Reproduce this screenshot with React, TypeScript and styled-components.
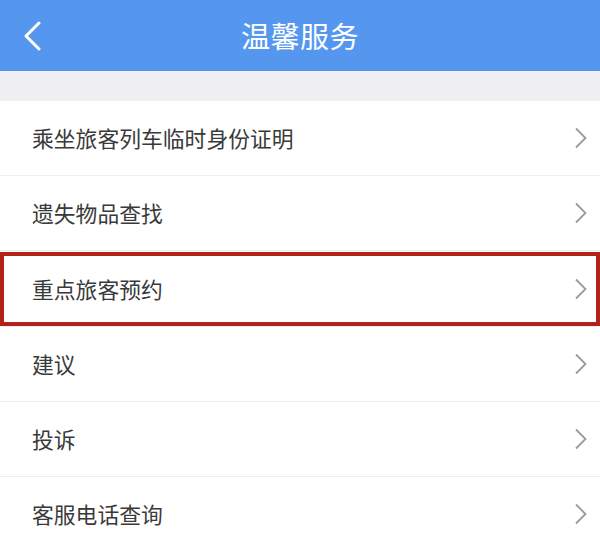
import styled, { createGlobalStyle } from "styled-components";

const items = [
  "乘坐旅客列车临时身份证明",
  "遗失物品查找",
  "重点旅客预约",
  "建议",
  "投诉",
  "客服电话查询",
];

const GlobalStyle = createGlobalStyle`
  html, body {
    margin: 0;
    padding: 0;
    background: #ffffff;
  }
  body {
    font-family: "Noto Sans CJK SC", "Noto Sans", sans-serif;
  }
`;

const Page = styled.div`
  width: 600px;
  height: 550px;
  overflow: hidden;
  background: #ffffff;
`;

const TopBar = styled.div`
  height: 71px;
  background: #5597ef;
  display: flex;
  align-items: center;
  justify-content: center;
  position: relative;
`;

const BackBtn = styled.div`
  position: absolute;
  left: 22px;
  top: 21px;
  width: 22px;
  height: 30px;
  display: flex;
`;

const Title = styled.div`
  color: #ffffff;
  font-size: 29px;
  line-height: 1;
  letter-spacing: 0.5px;
  margin-top: -1px;
`;

const Spacer = styled.div`
  height: 30px;
  background: #efeff4;
`;

const List = styled.div`
  display: flex;
  flex-direction: column;
`;

const Row = styled.div<{ $active?: boolean }>`
  box-sizing: border-box;
  height: 75px;
  display: flex;
  align-items: center;
  justify-content: space-between;
  padding: 0 12px 0 32px;
  border-bottom: 1px solid #ededed;
  box-shadow: ${(p) => (p.$active ? "inset 0 0 0 4px #b3211b" : "none")};
  margin-top: ${(p) => (p.$active ? "1px" : "0")};
`;

const Label = styled.span`
  font-size: 21.8px;
  color: #3a3a3a;
  line-height: 1;
`;

const Chevron = () => (
  <svg width="14" height="22" viewBox="0 0 14 22">
    <polyline
      points="2,1.5 11.5,11 2,20.5"
      fill="none"
      stroke="#9a9a9a"
      strokeWidth="1.8"
    />
  </svg>
);

export default function App() {
  return (
    <Page>
      <GlobalStyle />
      <TopBar>
        <BackBtn>
          <svg width="22" height="30" viewBox="0 0 22 30">
            <polyline
              points="17,2 4,15 17,28"
              fill="none"
              stroke="#ffffff"
              strokeWidth="3"
              strokeLinecap="round"
              strokeLinejoin="round"
            />
          </svg>
        </BackBtn>
        <Title>温馨服务</Title>
      </TopBar>
      <Spacer />
      <List>
        {items.map((item, i) => (
          <Row key={item} $active={i === 2}>
            <Label>{item}</Label>
            <Chevron />
          </Row>
        ))}
      </List>
    </Page>
  );
}
